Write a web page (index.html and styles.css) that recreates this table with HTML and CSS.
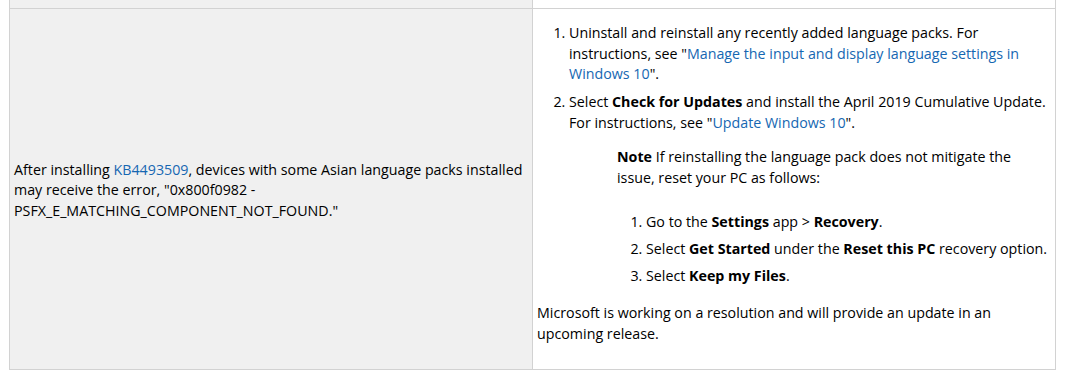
FILE: index.html
```html
<!DOCTYPE html>
<html>
<head>
<meta charset="utf-8">
<link rel="stylesheet" href="styles.css">
</head>
<body>
<table class="grid">
  <colgroup><col class="c1"><col class="c2"></colgroup>
  <tr class="prev"><td class="cell-left"></td><td class="cell-right"></td></tr>
  <tr>
    <td class="cell-left main-left">After installing <a href="#">KB4493509</a>, devices with some Asian language packs installed may receive the error, "0x800f0982 - PSFX_E_MATCHING_COMPONENT_NOT_FOUND."</td>
    <td class="cell-right main-right">
      <ol class="steps">
        <li>Uninstall and reinstall any recently added language packs. For instructions, see "<a href="#">Manage the input and display language settings in Windows 10</a>".</li>
        <li>Select <b>Check for Updates</b> and install the April 2019 Cumulative Update. For instructions, see "<a href="#">Update Windows 10</a>".</li>
      </ol>
      <div class="note">
        <p class="note-text"><b>Note</b> If reinstalling the language pack does not mitigate the issue, reset your PC as follows:</p>
        <ol class="substeps">
          <li>Go to the <b>Settings</b> app &gt; <b>Recovery</b>.</li>
          <li>Select <b>Get Started</b> under the <b>Reset this PC</b> recovery option.</li>
          <li>Select <b>Keep my Files</b>.</li>
        </ol>
      </div>
      <p class="closing">Microsoft is working on a resolution and will provide an update in an upcoming release.</p>
    </td>
  </tr>
</table>
</body>
</html>
```

FILE: styles.css
```css
html, body {
  margin: 0;
  background: #ffffff;
}
body {
  padding: 0 0 0 9px;
  font-family: "Open Sans", "Noto Sans", sans-serif;
  font-size: 14.25px;
  line-height: 20.5px;
  color: #000000;
}
a {
  color: #1667b2;
  text-decoration: none;
}
b {
  font-weight: 700;
}
.grid {
  border-collapse: collapse;
  table-layout: fixed;
  width: 1046px;
}
.c1 { width: 523px; }
.c2 { width: 523px; }
.grid td {
  border: 1px solid #d2d2d2;
  vertical-align: middle;
}
.prev td {
  border-top: none;
  height: 8px;
  padding: 0;
}
.cell-left {
  background: #f0f0f0;
}
.cell-right {
  background: #ffffff;
}
.main-left {
  padding: 3px 4px 0 4px;
}
.main-right {
  padding: 14px 4px 25px 4px;
}
.steps {
  margin: 0;
  padding-left: 32px;
}
.steps li {
  margin-bottom: 7.5px;
}
.note {
  margin: 14px 0 0 80px;
}
.note-text {
  margin: 0;
}
.substeps {
  margin: 24px 0 0 0;
  padding-left: 29px;
}
.substeps li {
  margin-bottom: 6.5px;
}
.closing {
  margin: 16.5px 0 0 0;
}
```
